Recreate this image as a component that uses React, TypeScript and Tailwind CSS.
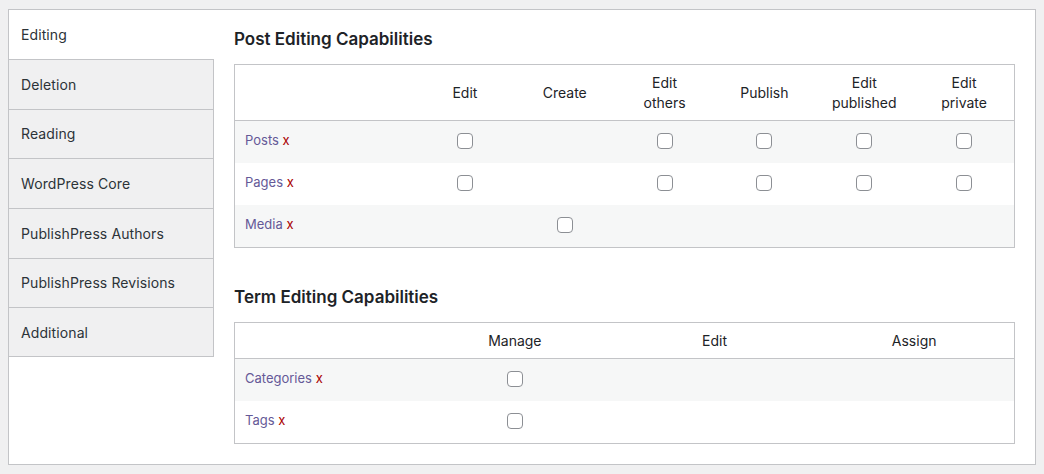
import React from 'react'

const tabs = ['Editing', 'Deletion', 'Reading', 'WordPress Core', 'PublishPress Authors', 'PublishPress Revisions', 'Additional']

const postCols = [['Edit'], ['Create'], ['Edit', 'others'], ['Publish'], ['Edit', 'published'], ['Edit', 'private']]
const postRows: { name: string; checks: boolean[] }[] = [
  { name: 'Posts', checks: [true, false, true, true, true, true] },
  { name: 'Pages', checks: [true, false, true, true, true, true] },
  { name: 'Media', checks: [false, true, false, false, false, false] },
]

const termCols = ['Manage', 'Edit', 'Assign']
const termRows: { name: string; checks: boolean[] }[] = [
  { name: 'Categories', checks: [true, false, false] },
  { name: 'Tags', checks: [true, false, false] },
]

function Box() {
  return <span className="block h-4 w-4 rounded-[4px] border border-[#8c8f94] bg-white" />
}

function RowLabel({ name }: { name: string }) {
  return (
    <div className="pl-[10px] text-[13px]">
      <a className="text-[#655997]">{name}</a> <span className="text-[#a00]">x</span>
    </div>
  )
}

export default function App() {
  return (
    <div className="min-h-[474px] bg-[#f0f0f1] pl-2 pt-[9px] font-['Inter',sans-serif] text-[#1d2327]">
      <div className="flex h-[456px] w-[1028px] border border-[#c3c4c7] bg-white">
        {/* tabs */}
        <nav className="w-[205px] shrink-0">
          {tabs.map((t, i) =>
            i === 0 ? (
              <div key={t} className="flex h-[49px] items-center pl-3 text-[14px] tracking-[0.1px] text-[#2c3338]">
                {t}
              </div>
            ) : (
              <div
                key={t}
                className={`flex h-[49.67px] items-center border-r border-t border-[#c3c4c7] bg-[#f0f0f1] pl-3 text-[14px] tracking-[0.1px] text-[#2c3338] ${
                  i === tabs.length - 1 ? 'border-b' : ''
                }`}
              >
                {t}
              </div>
            )
          )}
        </nav>

        <div className="flex-1 px-5 pt-[19px]">
          <h2 className="text-[17px] font-semibold leading-5">Post Editing Capabilities</h2>
          <div className="mt-[15px] border border-[#c3c4c7]">
            <div className="grid h-[56px] grid-cols-[180px_repeat(6,1fr)] items-center border-b border-[#c3c4c7] text-[14px] leading-5">
              <div />
              {postCols.map((c, i) => (
                <div key={i} className="text-center">
                  {c.map((l) => (
                    <div key={l}>{l}</div>
                  ))}
                </div>
              ))}
            </div>
            {postRows.map((r, ri) => (
              <div
                key={r.name}
                className={`grid h-[42px] grid-cols-[180px_repeat(6,1fr)] items-center pb-[3px] ${ri % 2 === 0 ? 'bg-[#f6f7f7]' : 'bg-white'}`}
              >
                <RowLabel name={r.name} />
                {r.checks.map((c, i) => (
                  <div key={i} className="flex justify-center">
                    {c && <Box />}
                  </div>
                ))}
              </div>
            ))}
          </div>

          <h2 className="mt-[39px] text-[17px] font-semibold leading-5">Term Editing Capabilities</h2>
          <div className="mt-[15px] border border-[#c3c4c7]">
            <div className="grid h-[36px] grid-cols-[180px_repeat(3,1fr)] items-center border-b border-[#c3c4c7] text-[14px] leading-5">
              <div />
              {termCols.map((c) => (
                <div key={c} className="text-center">
                  {c}
                </div>
              ))}
            </div>
            {termRows.map((r, ri) => (
              <div
                key={r.name}
                className={`grid h-[42px] grid-cols-[180px_repeat(3,1fr)] items-center pb-[3px] ${ri % 2 === 0 ? 'bg-[#f6f7f7]' : 'bg-white'}`}
              >
                <RowLabel name={r.name} />
                {r.checks.map((c, i) => (
                  <div key={i} className="flex justify-center">
                    {c && <Box />}
                  </div>
                ))}
              </div>
            ))}
          </div>
        </div>
      </div>
    </div>
  )
}
